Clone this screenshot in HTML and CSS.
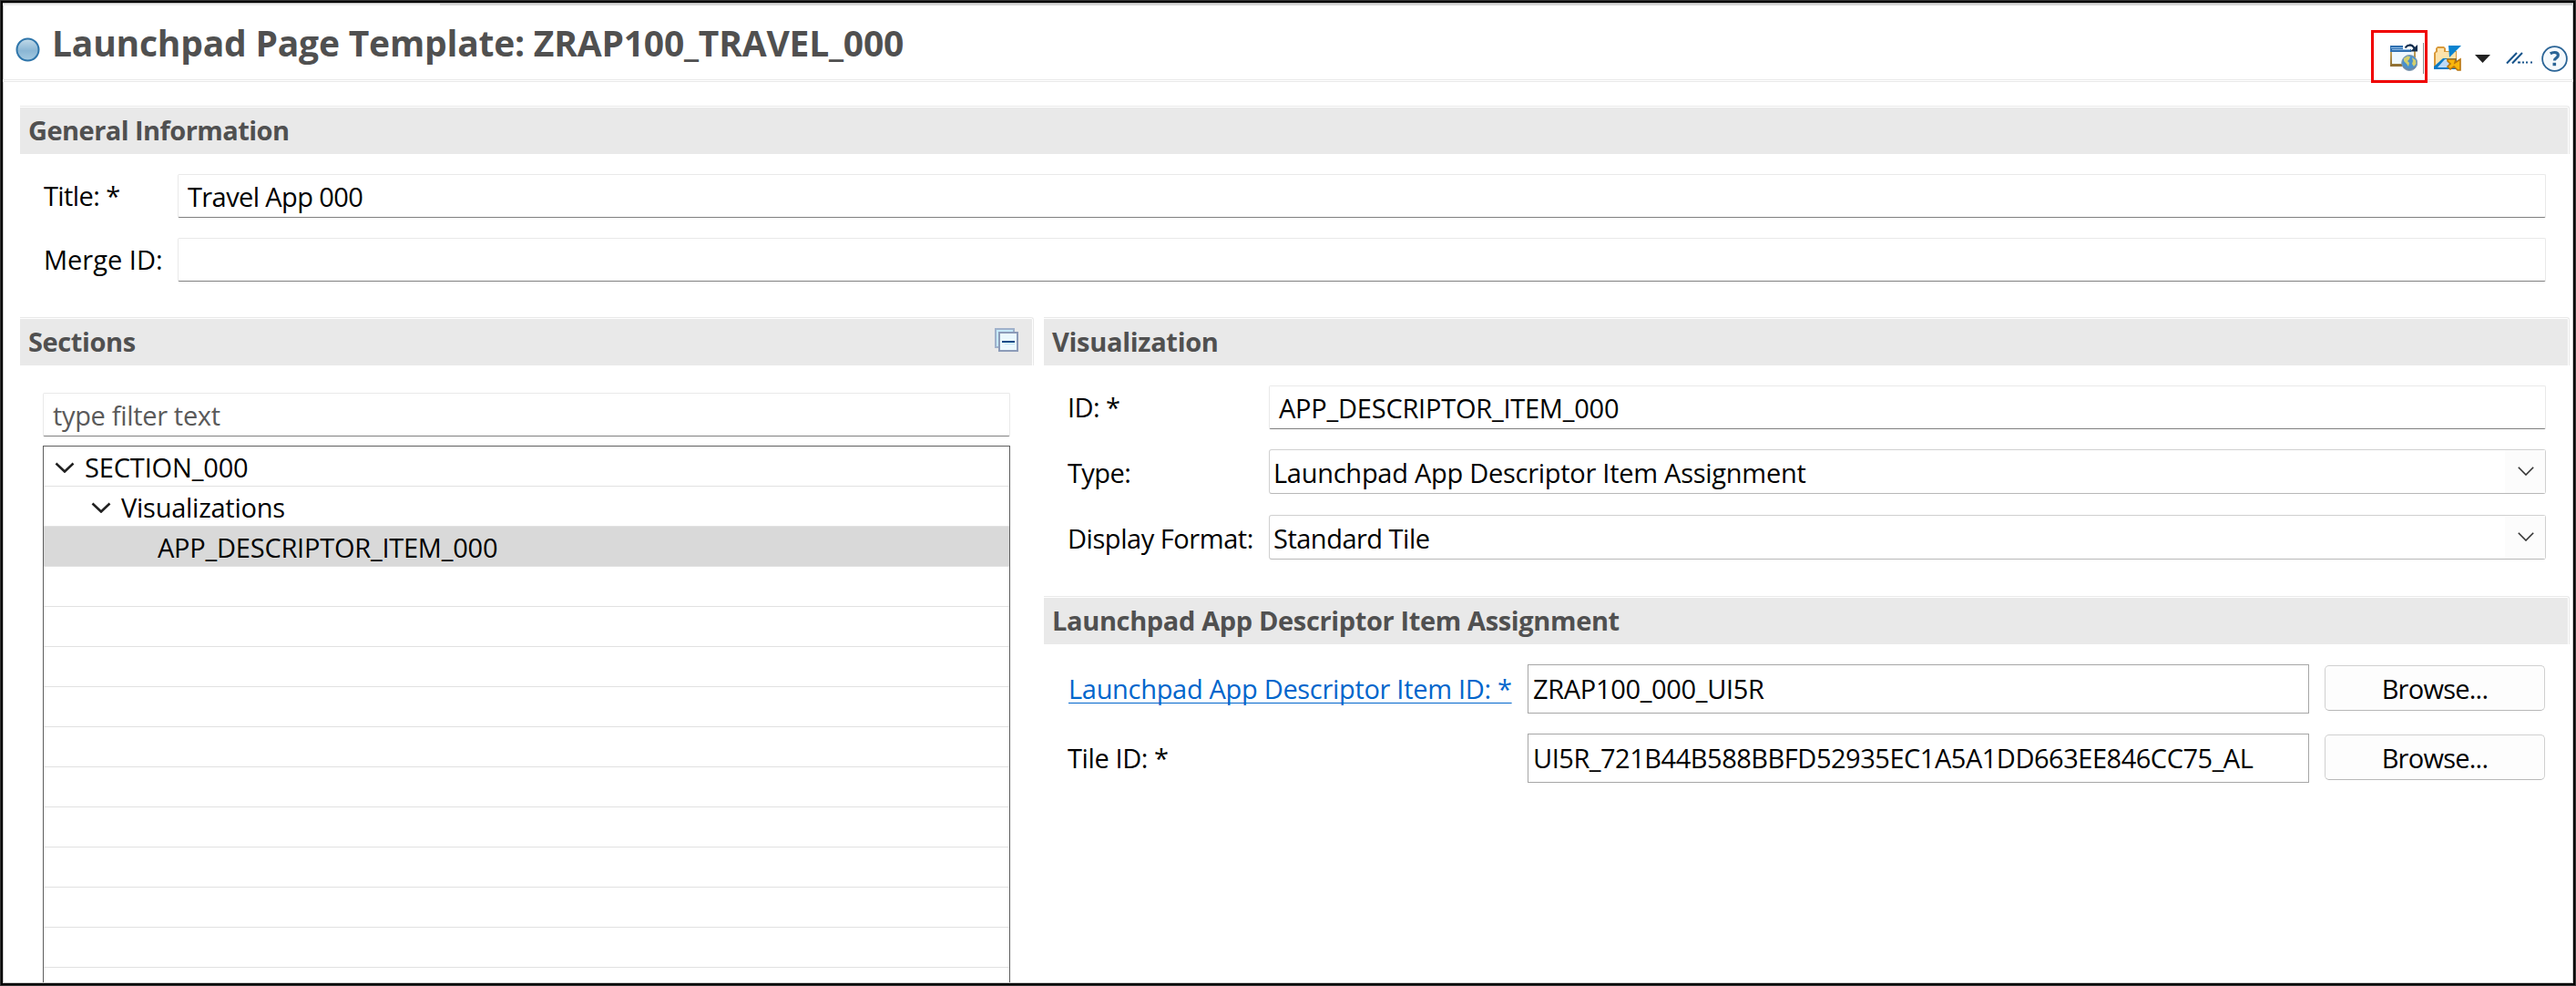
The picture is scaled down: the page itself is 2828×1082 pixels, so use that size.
FILE: index.html
```html
<!DOCTYPE html>
<html lang="en">
<head>
<meta charset="utf-8">
<title>Launchpad Page Template: ZRAP100_TRAVEL_000</title>
<link rel="stylesheet" href="styles.css">
</head>
<body>
<div class="window">
  <div class="tab-edge"></div>
  <header class="form-header">
    <svg class="status-dot" width="27" height="27" viewBox="0 0 27 27"><defs><linearGradient id="dot" x1="0" y1="0" x2="0" y2="1"><stop offset="0" stop-color="#c3dbe9"/><stop offset=".55" stop-color="#8ab6d4"/><stop offset="1" stop-color="#a5cbe2"/></linearGradient></defs><circle cx="13.5" cy="13.5" r="12" fill="url(#dot)" stroke="#2e75aa" stroke-width="2"/></svg>
    <h1 class="form-title">Launchpad Page Template: ZRAP100_TRAVEL_000</h1>
    <div class="toolbar">
      <div class="tool-preview">
        <svg width="30" height="30" viewBox="0 0 30 30">
          <defs><linearGradient id="frame" x1="0" y1="0" x2="0" y2="1"><stop offset="0" stop-color="#c9a860"/><stop offset="1" stop-color="#8c6c30"/></linearGradient></defs>
          <rect x="0" y="7" width="28" height="18" fill="url(#frame)"/>
          <path d="M2 8h24v14H2z" fill="#eff8fe"/>
          <path d="M0 2h14v4h9v3H0z" fill="#2f6fb0"/><path d="M1 4.500h13M2 6.500h20" stroke="#8fbce6" stroke-width="1"/>
          <path d="M16.500 4.500Q19 1 22.500 1.500Q26 2 27 6" fill="none" stroke="#142f4f" stroke-width="2"/><path d="M30 1v7.500h-8z" fill="#142f4f"/><path d="M24 0h5l-2.500 4z" fill="#fff"/><path d="M21 1.500q4.500 0 6 4.500" fill="none" stroke="#142f4f" stroke-width="2"/>
          <circle cx="21.200" cy="21" r="8.500" fill="#4a90cc" stroke="#8499ad" stroke-width="1"/><path d="M15 16l4-2.500 3 .5-1 3-2 2 2 2-1 4-2-3-3-3zM24 15l4 3 .5 4-2.500 3-2-3 1-3z" fill="#d3cf6c"/><path d="M14.500 25q6 6.500 13.500 0" fill="none" stroke="#6d86a3" stroke-width="1.500"/>
        </svg>
        <i class="divider"></i>
      </div>
      <svg class="tool-folder" width="30" height="28" viewBox="0 0 30 28">
        <path d="M0 8l2-2V3l2-2h7l2 2v3h12v20H0z" fill="#d99a3c"/><path d="M4 3h7v4h13v16H2V8l2-1z" fill="#fde3ab"/>
        <path d="M0 26V23L10 14h15v12z" fill="#0879c4"/><path d="M4 24l8-9h12v9z" fill="#bcd9f6"/>
        <path d="M16 0h14l-5 5-8 8z" fill="#0a83cf"/>
        <path d="M15 15h9l-1 4 6-4v12h-3l-4-4-4 3-3-3 3-3-3-3z" fill="#fab60b" stroke="#b8740d" stroke-width="1.600"/>
      </svg>
      <svg class="tool-menu" width="17" height="9" viewBox="0 0 17 9"><path d="M0 0h17L8.500 9z" fill="#222"/></svg>
      <svg class="tool-lines" width="30" height="14" viewBox="0 0 30 14"><path d="M1 12.500L12 1M7 12.500L18 1" stroke="#17548b" stroke-width="2"/><path d="M13 11.500h3m2 0h2m2 0h2m3 0h2" stroke="#17548b" stroke-width="2"/></svg>
      <svg class="tool-help" width="29" height="29" viewBox="0 0 29 29"><circle cx="14.500" cy="14.500" r="13.400" fill="#f5f9fc" stroke="#2a6496" stroke-width="1.800"/><path d="M9.800 8.800q2-1.300 4.600-1.300q4 0 4 3.100q0 1.800-2 3t-2 3" fill="none" stroke="#2a6496" stroke-width="3.200"/><path d="M12.500 18.800h3.600v3.400h-3.600z" fill="#2a6496"/></svg>
    </div>
  </header>
  <main class="form-body">
    <section class="general">
      <h2 class="band"><span class="t-general">General Information</span></h2>
      <div class="field general-field"><label class="t-title">Title: *</label><div class="input"><span class="t-travel">Travel App 000</span></div></div>
      <div class="field general-field"><label class="t-merge">Merge ID:</label><div class="input"></div></div>
    </section>
    <div class="columns">
      <section class="sections">
        <h2 class="band"><span class="t-sections">Sections</span>
          <svg class="collapse" width="27" height="27" viewBox="0 0 27 27"><rect x="1" y="1" width="20" height="20" fill="#c5e9fa" stroke="#9fb1cb" stroke-width="2"/><rect x="5" y="5" width="20" height="20" fill="#eaf8fe" stroke="#8c9bb8" stroke-width="2"/><path d="M8 15h14" stroke="#004b87" stroke-width="2"/><path d="M11 17.500h11" stroke="#bfe3f8"/></svg>
        </h2>
        <div class="input filter"><span class="t-filter">type filter text</span></div>
        <ul class="tree">
          <li class="row level-1"><svg class="twisty" width="22" height="12" viewBox="0 0 22 12"><path d="M1.500 1.500L11 10.500L20.500 1.500"/></svg><span class="t-section">SECTION_000</span></li>
          <li class="row level-2"><svg class="twisty" width="22" height="12" viewBox="0 0 22 12"><path d="M1.500 1.500L11 10.500L20.500 1.500"/></svg><span class="t-visualizations">Visualizations</span></li>
          <li class="row level-3 selected"><span class="t-item">APP_DESCRIPTOR_ITEM_000</span></li>
          <li class="row"></li><li class="row"></li><li class="row"></li><li class="row"></li><li class="row"></li>
          <li class="row"></li><li class="row"></li><li class="row"></li><li class="row"></li><li class="row"></li>
          <li class="row"></li>
        </ul>
      </section>
      <div class="details">
        <section class="visualization">
          <h2 class="band"><span class="t-visualization">Visualization</span></h2>
          <div class="field vis-field"><label class="t-id">ID: *</label><div class="input"><span class="t-item">APP_DESCRIPTOR_ITEM_000</span></div></div>
          <div class="field vis-field select-field"><label class="t-type">Type:</label><div class="combo"><span class="t-type-value">Launchpad App Descriptor Item Assignment</span><span class="drop"><svg width="18" height="10" viewBox="0 0 18 10"><path d="M.8.8L9 9L17.200.8"/></svg></span></div></div>
          <div class="field vis-field select-field format-field"><label class="t-format">Display Format:</label><div class="combo"><span class="t-format-value">Standard Tile</span><span class="drop"><svg width="18" height="10" viewBox="0 0 18 10"><path d="M.8.8L9 9L17.200.8"/></svg></span></div></div>
        </section>
        <section class="assignment">
          <h2 class="band"><span class="t-assignment">Launchpad App Descriptor Item Assignment</span></h2>
          <div class="field assign-field"><a class="link"><span class="t-link">Launchpad App Descriptor Item ID: *</span></a><div class="box"><span class="t-zrap">ZRAP100_000_UI5R</span></div><button class="browse"><span class="t-browse">Browse...</span></button></div>
          <div class="field assign-field"><label class="t-tile">Tile ID: *</label><div class="box"><span class="t-ui5r">UI5R_721B44B588BBFD52935EC1A5A1DD663EE846CC75_AL</span></div><button class="browse"><span class="t-browse">Browse...</span></button></div>
        </section>
      </div>
    </div>
  </main>
</div>
</body>
</html>
```
FILE: styles.css
```css
* { box-sizing: border-box; margin: 0; padding: 0; }
body { width: 2828px; height: 1082px; overflow: hidden; background: #fff; color: #000; font: 29px/40px "Open Sans", "Noto Sans", sans-serif; }
svg { display: block; flex: none; }
span, label, h1 { white-space: nowrap; }
.window { height: 1082px; border: 3px solid #000; outline: 1px solid #333; outline-offset: -1px; box-shadow: inset 0 0 0 1px #c4c4c4; overflow: hidden; display: flex; flex-direction: column; }
.tab-edge { height: 3px; background: linear-gradient(90deg, #eee 480px, #d8d8d8 480px); border-top: 1px solid #bbb; flex: none; }

/* Header */
.form-header { height: 82px; flex: none; display: flex; align-items: flex-start; border-bottom: 1px solid #e9e9e9; box-shadow: 0 1px #fff, 0 2px #e9e9e9; }
.status-dot { margin: 35px 0 0 14px; }
.form-title { margin: 15px 0 0 13px; font-size: 39px; line-height: 52px; font-weight: 700; color: #505050; letter-spacing: -.21px; }
.toolbar { margin-left: auto; display: flex; align-items: flex-start; position: relative; z-index: 1; padding-right: 6px; }
.tool-preview { width: 62px; height: 58px; margin-top: 27px; border: 3px solid #f00000; padding: 12px 0 0 18px; display: flex; }
.divider { width: 1px; height: 34px; margin: -1px 0 0 6px; background: #888; }
.tool-folder { margin: 44px 0 0 7px; }
.tool-menu { margin: 54px 0 0 15px; }
.tool-lines { margin: 51px 0 0 17px; }
.tool-help { margin: 44px 0 0 9px; }

/* Section title bars */
.form-body { padding-top: 28px; flex: 1; min-height: 0; }
.band { height: 53px; margin-left: 19px; margin-right: 4px; border-top: 1px solid #e9e9e9; border-right: 1px solid #e9e9e9; border-top-right-radius: 3px; padding: 1px 1px 0 0; background: #e9e9e9 content-box; background-clip: content-box; color: #505050; font-size: 29px; line-height: 50px; font-weight: 700; display: flex; justify-content: space-between; }
.band > span { margin-left: 9px; }

/* Form fields */
.field { display: flex; align-items: flex-start; }
.input { height: 48px; flex: 1; border: 1px solid #e9e9e9; border-bottom-color: #808080; border-radius: 2px; padding: 4px 0 0 10px; background: #fff; }
.general-field { margin: 22px 30px 0 45px; }
.general-field label { width: 147px; padding-top: 4px; }
.columns { display: flex; margin-top: 39px; height: 730px; }
.sections { width: 1132px; display: flex; flex-direction: column; }
.sections .band { margin-right: 0; flex: none; }
.collapse { margin: 10px 14px 0 0; }
.filter { flex: none; margin: 30px 26px 0 44px; color: #5a5a5a; }

/* Tree */
.tree { list-style: none; margin: 10px 26px 0 44px; border: 1px solid #5e5e5e; border-bottom: 0; flex: 1; overflow: hidden; min-height: 0; }
.row { height: 44px; border-bottom: 1px solid #e1e1e1; display: flex; align-items: flex-start; line-height: 45px; }
.twisty { margin: 17px 11px 0 0; fill: none; stroke: #202020; stroke-width: 2.6; }
.level-1 { padding-left: 12px; }
.level-2 { padding-left: 52px; }
.level-3 { padding-left: 125px; }
.selected { background: #d9d9d9; }

/* Details column */
.details { flex: 1; padding-left: 11px; }
.details .band { margin-left: 0; }
.vis-field { margin: 22px 30px 0 26px; }
.vis-field label { width: 221px; padding-top: 4px; }
.select-field label { padding-top: 6px; }
.format-field { margin-top: 23px; }
.combo { flex: 1; height: 49px; border: 1px solid #d0d0d0; border-bottom-color: #b8b8b8; border-radius: 3px; padding-left: 4px; display: flex; justify-content: space-between; line-height: 50px; }
.drop { width: 44px; padding: 18px 0 0 14px; background: #fcfcfc; }
.drop path { fill: none; stroke: #333; stroke-width: 1.6; }
.assignment { margin-top: 40px; }
.assign-field { margin: 22px 30px 0 26px; }
.assign-field > label, .link { width: 505px; padding-top: 7px; flex: none; }
.link { color: #0066cc; padding-left: 1px; }
.link span { text-decoration: underline 1px; text-underline-offset: 4px; text-decoration-skip-ink: none; }
.box { width: 858px; height: 54px; border: 1px solid #a6a6a6; padding-left: 5px; line-height: 52px; }
.browse { width: 242px; height: 50px; margin: 1px 0 0 17px; padding-top: 1px; border: 1px solid #d0d0d0; border-bottom-color: #b8b8b8; border-radius: 5px; background: #fdfdfd; font: inherit; color: #000; }

/* Tracking of the individual texts */
.t-general { letter-spacing: -.55px; }
.t-title, .t-travel, .t-id, .t-type { letter-spacing: -.6px; }
.t-sections { letter-spacing: -.4px; }
.t-filter { letter-spacing: -.33px; }
.t-section { letter-spacing: -.15px; }
.t-visualizations { letter-spacing: -.26px; }
.t-item { letter-spacing: -.23px; }
.t-visualization { letter-spacing: -.3px; }
.t-type-value { letter-spacing: -.27px; }
.t-format { letter-spacing: -.45px; }
.t-format-value { letter-spacing: -.5px; }
.t-assignment { letter-spacing: -.36px; }
.t-link { letter-spacing: -.31px; }
.t-tile { letter-spacing: -.4px; }
.t-zrap { letter-spacing: -.33px; }
.t-ui5r { letter-spacing: -.48px; }
.t-browse { letter-spacing: -.75px; }
```
